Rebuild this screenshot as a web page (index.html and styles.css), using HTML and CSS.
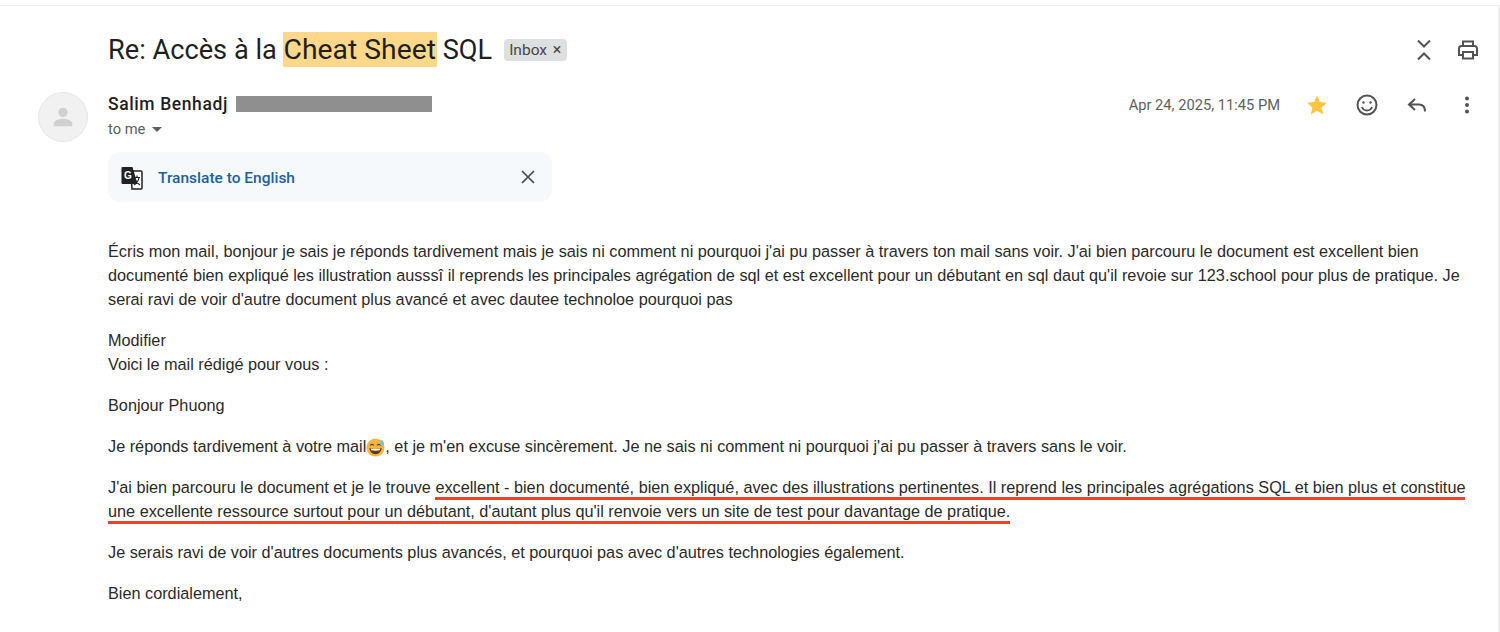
FILE: index.html
```html
<!DOCTYPE html>
<html lang="en">
<head>
    <meta charset="UTF-8">
    <meta name="viewport" content="width=device-width, initial-scale=1.0">
    <title>Re: Accès à la Cheat Sheet SQL</title>
    <link rel="stylesheet" href="styles.css">
</head>
<body>
  <div class="mail">
    <div class="subject-row">
      <h1 class="subject">Re: Accès à la <span class="highlight">Cheat Sheet</span> SQL</h1>
      <span class="label">Inbox <span class="label-x">×</span></span>
      <div class="subject-icons">
        <svg class="icon" viewBox="0 0 24 24" width="24" height="24" fill="none" stroke="#505352" stroke-width="2"><path d="M6 2.500l6 6 6-6M6 21.500l6-6 6 6"/></svg>
        <svg class="icon" viewBox="0 0 24 24" width="24" height="24" fill="none" stroke="#505352" stroke-width="2"><path d="M7 8V3.500h10V8M7 17H3v-6.500A2.500 2.500 0 0 1 5.500 8h13a2.500 2.500 0 0 1 2.500 2.500V17h-4"/><path d="M7 14h10v6.500H7z"/></svg>
      </div>
    </div>

    <div class="head-row">
      <div class="avatar">
        <svg viewBox="0 0 24 24" width="28" height="28" fill="#cfd1d0"><circle cx="12" cy="8" r="4"/><path d="M4 20v-2c0-3 5-4.500 8-4.500s8 1.500 8 4.500v2z"/></svg>
      </div>
      <div class="sender">
        <div class="sender-line"><span class="sender-name">Salim Benhadj</span><span class="redacted"></span></div>
        <div class="to-me">to me <span class="caret"></span></div>
      </div>
      <div class="head-actions">
        <span class="date">Apr 24, 2025, 11:45 PM</span>
        <svg class="star" viewBox="0 0 24 24" width="24" height="24" fill="#fcc542"><path d="M12 2.500l2.900 6.600 7.100.7-5.400 4.700 1.600 7-6.200-3.700-6.200 3.700 1.600-7L2 9.800l7.100-.7z"/></svg>
        <svg class="icon" viewBox="0 0 24 24" width="24" height="24" fill="none" stroke="#505352" stroke-width="2"><circle cx="12" cy="12" r="9.500"/><circle cx="8.500" cy="9.500" r="1.200" fill="#505352" stroke="none"/><circle cx="15.500" cy="9.500" r="1.200" fill="#505352" stroke="none"/><path d="M7 14c1 2.500 3 3.500 5 3.500s4-1 5-3.500"/></svg>
        <svg class="icon" viewBox="0 0 24 24" width="24" height="24" fill="none" stroke="#505352" stroke-width="2"><path d="M10 6l-6 5.500 6 5.500M4 11.500h10c3.500 0 6 2.500 6 7"/></svg>
        <svg class="icon" viewBox="0 0 24 24" width="24" height="24" fill="#505352"><circle cx="12" cy="5.500" r="2"/><circle cx="12" cy="12" r="2"/><circle cx="12" cy="18.500" r="2"/></svg>
      </div>
    </div>

    <div class="translate">
      <svg class="translate-icon" viewBox="0 0 24 24" width="24" height="24">
        <path d="M11 5h10a1 1 0 0 1 1 1v16a1 1 0 0 1-1 1H12z" fill="#fff" stroke="#202124" stroke-width="1.500"/>
        <path d="M2.500 1h10l5 17h-15a1 1 0 0 1-1-1V2a1 1 0 0 1 1-1z" fill="#202124"/>
        <text class="translate-g" x="4" y="13">G</text>
        <path d="M14 11.500h6M17 9.500v2M19 11.500c-.5 3-2.500 6-5 7.500M15 13.500c1 2.500 3 4.500 5 5.500" fill="none" stroke="#202124" stroke-width="1.200"/>
      </svg>
      <span class="translate-link">Translate to English</span>
      <svg class="translate-close" viewBox="0 0 24 24" width="24" height="24" fill="none" stroke="#444746" stroke-width="1.700"><path d="M6 6l12 12M18 6L6 18"/></svg>
    </div>

    <div class="body">
      <p>Écris mon mail, bonjour je sais je réponds tardivement mais je sais ni comment ni pourquoi j'ai pu passer à travers ton mail sans voir. J'ai bien parcouru le document est excellent bien documenté bien expliqué les illustration ausssî il reprends les principales agrégation de sql et est excellent pour un débutant en sql daut qu'il revoie sur 123.school pour plus de pratique. Je serai ravi de voir d'autre document plus avancé et avec dautee technoloe pourquoi pas</p>
      <p>Modifier<br>Voici le mail rédigé pour vous :</p>
      <p>Bonjour Phuong</p>
      <p>Je réponds tardivement à votre mail<svg class="emoji" viewBox="0 0 20 20" width="19" height="19"><circle cx="10" cy="10" r="9.500" fill="#f5b53f"/><path d="M3.500 10.500c4 1.500 9 1.500 13 0-.5 4-3 6.500-6.500 6.500s-6-2.500-6.500-6.500z" fill="#5d3a12"/><path d="M5 11c3 .8 7 .8 10 0l-.4 2c-3 .6-6 .6-9.200 0z" fill="#fff"/><path d="M4.500 8c.8-1.800 3-1.800 3.800 0M11.700 8c.8-1.800 3-1.800 3.800 0" fill="none" stroke="#5d3a12" stroke-width="1.200"/><path d="M16.500 1.500c1.500 2 2.500 3 2.500 4.200a2.200 2.200 0 0 1-4.400 0c0-1.200 1-2.200 1.900-4.200z" fill="#6cc4ee"/></svg>, et je m'en excuse sincèrement. Je ne sais ni comment ni pourquoi j'ai pu passer à travers sans le voir.</p>
      <p>J'ai bien parcouru le document et je le trouve <span class="marked">excellent - bien documenté, bien expliqué, avec des illustrations pertinentes. Il reprend les principales agrégations SQL et bien plus et constitue</span> <span class="marked">une excellente ressource surtout pour un débutant, d'autant plus qu'il renvoie vers un site de test pour davantage de pratique.</span></p>
      <p>Je serais ravi de voir d'autres documents plus avancés, et pourquoi pas avec d'autres technologies également.</p>
      <p>Bien cordialement,</p>
    </div>
  </div>
</body>
</html>
```

FILE: styles.css
```css
html, body {
    margin: 0;
    height: 632px;
    overflow: hidden;
    background-color: #ffffff;
}

body {
    font-family: 'Liberation Sans', Arial, sans-serif;
    color: #2a2a2a;
}

.mail {
    height: 626px;
    margin-top: 5px;
    border-top: 1px solid #ececec;
    border-right: 2px solid #f0f0f0;
    padding: 0 18px 0 108px;
    position: relative;
}

.subject-row {
    display: flex;
    align-items: center;
    height: 44px;
    margin-top: 22px;
}

.subject {
    margin: 0;
    font-family: Roboto, sans-serif;
    font-size: 27.200px;
    font-weight: 400;
    color: #1f1f1f;
    line-height: 34px;
}

.highlight {
    font-size: 28.300px;
    background-color: #fdd88a;
    padding: 1px 1px;
    margin: 0 -1px;
}

.label {
    margin-left: 12px;
    padding: 0 6px 0 5px;
    height: 22px;
    line-height: 22px;
    background-color: #dddfe1;
    border-radius: 4px;
    font-family: Roboto, sans-serif;
    font-size: 15.500px;
    color: #444746;
}

.label-x {
    font-size: 16px;
    margin-left: 2px;
}

.subject-icons {
    margin-left: auto;
    display: flex;
    gap: 20px;
}

.head-row {
    display: flex;
    margin-top: 15px;
    position: relative;
}

.avatar {
    position: absolute;
    left: -70px;
    top: 5px;
    width: 50px;
    height: 50px;
    border-radius: 50%;
    background-color: #f1f1f1;
    border: 1px solid #e6e6e6;
    box-sizing: border-box;
    display: flex;
    align-items: center;
    justify-content: center;
}

.sender-line {
    display: flex;
    align-items: center;
    height: 24px;
    margin-top: 5px;
}

.sender-name {
    font-family: Roboto, sans-serif;
    font-size: 17.500px;
    font-weight: 500;
    letter-spacing: 0.600px;
    color: #1f1f1f;
}

.redacted {
    width: 196px;
    height: 16px;
    margin-left: 8px;
    background-color: #8f8f8f;
}

.to-me {
    font-family: Roboto, sans-serif;
    font-size: 14.700px;
    color: #5e5e5e;
    line-height: 24px;
    display: flex;
    align-items: center;
    margin-top: 1px;
}

.caret {
    margin-left: 7px;
    margin-top: 1px;
    border-left: 5px solid transparent;
    border-right: 5px solid transparent;
    border-top: 5px solid #5e5e5e;
}

.head-actions {
    margin-left: auto;
    margin-right: 1px;
    display: flex;
    align-items: center;
    height: 36px;
}

.date {
    font-family: Roboto, sans-serif;
    font-size: 14.700px;
    color: #5e5e5e;
    margin-right: 25px;
}

.head-actions .icon {
    margin-left: 26px;
}

.translate {
    display: flex;
    align-items: center;
    width: 444px;
    height: 50px;
    margin-top: 11px;
    padding: 0 12px 0 12px;
    box-sizing: border-box;
    background-color: #f6f9fc;
    border-radius: 12px;
}

.translate-icon {
    margin-top: 2px;
}

.translate-g {
    font-family: 'Liberation Sans', sans-serif;
    font-size: 10px;
    font-weight: 700;
    fill: #ffffff;
}

.translate-link {
    margin-left: 14px;
    padding-top: 2px;
    font-family: Roboto, sans-serif;
    font-size: 15.500px;
    font-weight: 500;
    color: #1f5f9f;
}

.translate-close {
    margin-left: auto;
}

.body {
    margin-top: 37px;
    font-size: 16.250px;
    line-height: 24px;
    color: #2a2a2a;
}

.body p {
    margin: 0 0 17px;
}

.emoji {
    vertical-align: -5px;
}

.marked {
    padding-bottom: 1px;
    border-bottom: 3px solid #e8442e;
}
```
